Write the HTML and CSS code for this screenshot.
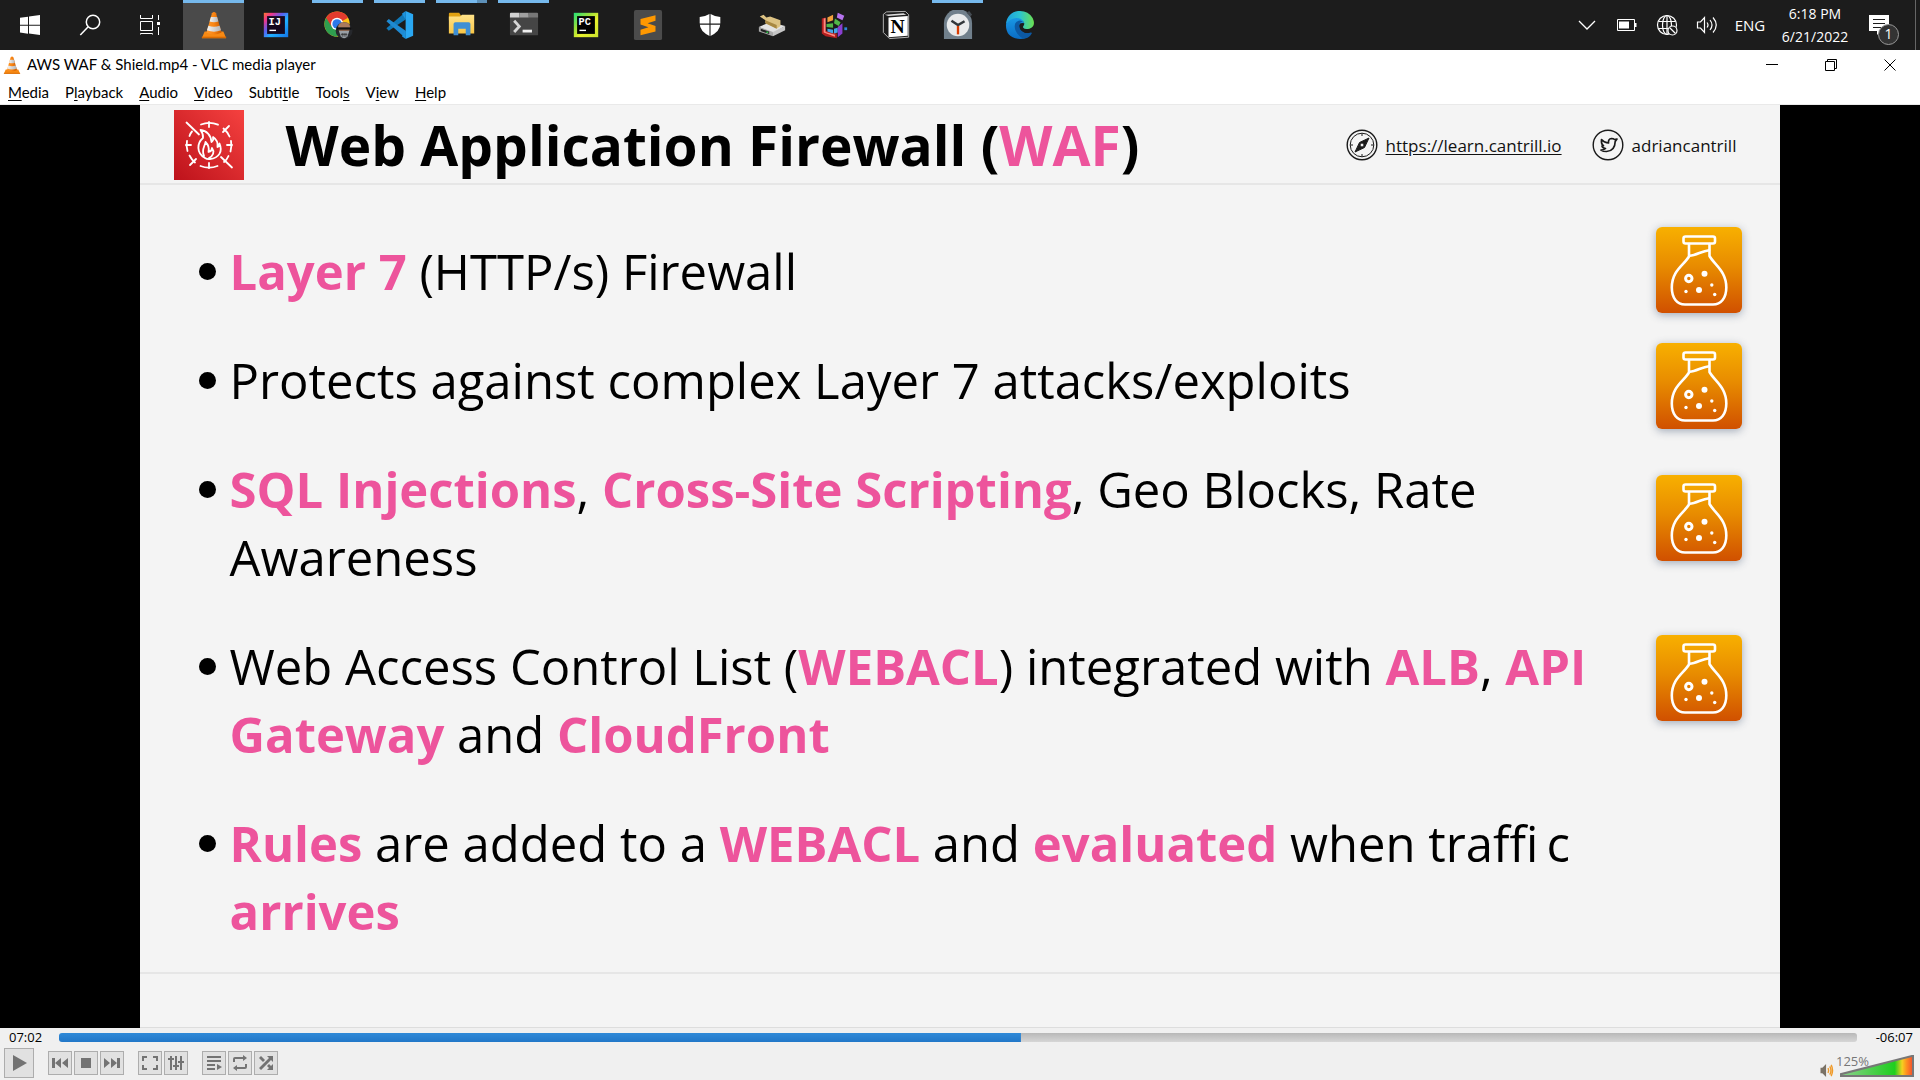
FILE: index.html
```html
<!DOCTYPE html>
<html lang="en">
<head>
<meta charset="utf-8">
<title>AWS WAF &amp; Shield.mp4 - VLC media player</title>
<link rel="stylesheet" href="styles.css">
</head>
<body>
<svg class="defs" aria-hidden="true">
  <defs>
    <linearGradient id="g-cone" x1="0" x2="1"><stop offset="0" stop-color="#ff9a2e"/><stop offset=".5" stop-color="#f98412"/><stop offset="1" stop-color="#c85a00"/></linearGradient>
    <linearGradient id="g-band" x1="0" x2="1"><stop offset="0" stop-color="#f4f4f4"/><stop offset="1" stop-color="#b4b4b4"/></linearGradient>
    <linearGradient id="g-ij" x1="0" y1="0" x2="1" y2="1"><stop offset="0" stop-color="#ff7a2e"/><stop offset=".18" stop-color="#f0358a"/><stop offset=".4" stop-color="#5a5ff0"/><stop offset=".6" stop-color="#1fb0ff"/><stop offset="1" stop-color="#1473e6"/></linearGradient>
    <linearGradient id="g-pc" x1="0" y1="0" x2="1" y2="1"><stop offset="0" stop-color="#21e07a"/><stop offset=".35" stop-color="#9be03a"/><stop offset=".6" stop-color="#e9f02c"/><stop offset="1" stop-color="#c9e22e"/></linearGradient>
    <linearGradient id="g-edge" x1="0" y1="0" x2="1" y2="0"><stop offset="0" stop-color="#1b9fe0"/><stop offset=".5" stop-color="#2cc4cf"/><stop offset="1" stop-color="#6be04f"/></linearGradient>
    <linearGradient id="g-edge2" x1="0" y1="0" x2="0" y2="1"><stop offset="0" stop-color="#1a9ae6"/><stop offset="1" stop-color="#0a6cc4"/></linearGradient>
    <linearGradient id="g-folder" x1="0" y1="0" x2="0" y2="1"><stop offset="0" stop-color="#ffe28a"/><stop offset="1" stop-color="#f9c646"/></linearGradient>
    <linearGradient id="g-waf" x1="0" y1="1" x2="1" y2="0"><stop offset="0" stop-color="#bd121b"/><stop offset="1" stop-color="#f5413f"/></linearGradient>
    <symbol id="cone" viewBox="0 0 32 32">
      <path d="M6 23h20l3 7H3z" fill="#f78a14"/><path d="M3 28.500h26V30H3z" fill="#d96a00"/>
      <path d="M13.800 3.500Q16 1 18.200 3.500L24 24q-8 4.500-16 0z" fill="url(#g-cone)"/>
      <path d="M12.700 7.500h6.600l1.400 4.800q-4.700 1.700-9.400 0z" fill="url(#g-band)"/>
      <path d="M10 16.800q6 2.200 12 0l1.500 4.900q-7.500 3-15 0z" fill="url(#g-band)"/>
    </symbol>
    <symbol id="flask" viewBox="0 0 86 86">
      <g fill="none" stroke="#fff" stroke-width="2.600" stroke-linejoin="round" stroke-linecap="round">
        <rect x="27.500" y="9.500" width="31.500" height="7" rx="2"/>
        <path d="M33 17v12.500C28 38 15.800 43.500 15.800 60.500C15.800 71 21 77.500 29 77.500H57C65 77.500 70.300 71 70.300 60.500C70.300 44 58.500 38 53.500 29V17"/>
        <path d="M33.500 28.800c7-.3 12-4.800 19.500-5.600"/>
        <circle cx="32.800" cy="51.500" r="3.200" stroke-width="3"/>
      </g>
      <g fill="#fff"><circle cx="48.500" cy="46.700" r="3"/><circle cx="43" cy="63" r="3"/><circle cx="55.800" cy="58" r="1.700"/><circle cx="30" cy="64.500" r="1.700"/><circle cx="58.700" cy="67.500" r="1.700"/></g>
    </symbol>
  </defs>
</svg>

<header class="taskbar">
  <nav class="system" aria-label="System">
    <button class="task" aria-label="Start"><svg viewBox="0 0 32 32"><path fill="#fff" d="M6 8.800l8-1.100v8H6zM15 7.500l11-1.500v9.700H15zM6 16.700h8v8l-8-1.100zM15 16.700h11V26l-11-1.500z"/></svg></button>
    <button class="task" aria-label="Search"><svg viewBox="0 0 32 32" fill="none" stroke="#fff" stroke-width="1.500"><circle cx="19" cy="13" r="6.700"/><path d="M14.200 17.800L6.300 26"/></svg></button>
    <button class="task" aria-label="Task View"><svg viewBox="0 0 32 32" fill="none" stroke="#fff"><path d="M6.500 6v3.500h12V6M6.500 12.500h12v9h-12zM6.500 25.500v-1h12v1M24.500 6v5M24.500 18v8"/><path d="M23 13h3v3h-3z" fill="#fff" stroke="none"/></svg></button>
  </nav>
  <nav class="apps" aria-label="Running apps">
    <button class="task active" aria-label="VLC media player"><svg><use href="#cone"/></svg></button>
    <button class="task" aria-label="IntelliJ IDEA"><svg viewBox="0 0 32 32"><path fill="url(#g-ij)" d="M3 3h26v26H3z"/><path fill="#14081e" d="M6.500 6.500h19v19h-19z"/><text x="8" y="16" class="logo-text">IJ</text><path fill="#fff" d="M9 21h7v1.500H9z"/></svg></button>
    <button class="task running" aria-label="Chrome"><svg viewBox="0 0 32 32"><circle cx="15" cy="15" r="13.500" fill="#fbc116"/><path fill="#e33b2e" d="M15 15L3.300 8.300A13.500 13.500 0 0 1 26.700 8.300z"/><path fill="#2f9e4f" d="M15 15L3.300 8.300A13.500 13.500 0 0 0 15 28.500l5-8z"/><path fill="#e33b2e" d="M3.300 8.300L9.500 18V9z"/><circle cx="15" cy="14.800" r="6.500" fill="#fff"/><circle cx="15" cy="14.800" r="5" fill="#2d78e8"/><circle cx="22.500" cy="22" r="9" fill="#26282c"/><path d="M16 19q0-6 6.500-6t6.500 6l-1 3H17z" fill="#a97a5e"/><path d="M14.500 18.500h16v2.500h-16z" fill="#111"/><path d="M17 22.500h11l-2 6q-3.500 3-7 0z" fill="#9aa0a6"/><path d="M19 26h7M20.500 24.500v4M22.500 24.500v4M24.500 24.500v4" stroke="#222" stroke-width=".7"/></svg></button>
    <button class="task running" aria-label="Visual Studio Code"><svg viewBox="0 0 32 32"><path fill="#1078b8" d="M22 2L1.500 19.500 4 22l18-12z"/><path fill="#1f8ad2" d="M4 9.500L1.500 12 22 30v-8z"/><path fill="#2aa8f2" d="M22 1l8 3.500v23L22 31z"/><path fill="#1c91dc" d="M22 1l-4 3 4 6zM22 31l-4-3 4-6z"/></svg></button>
    <button class="task running grouped" aria-label="File Explorer"><svg viewBox="0 0 32 32"><path fill="#e0a112" d="M2 4q0-1 1-1h10l2 3v5H2z"/><path fill="url(#g-folder)" d="M2 7h12l2-2h13v20H2z"/><path fill="#3f8fd4" d="M7 15q0-2 2-2h14q2 0 2 2v12h-5v-7h-8v7H7z"/></svg></button>
    <button class="task running" aria-label="Terminal"><svg viewBox="0 0 32 32"><path fill="#454545" d="M1 5h30v21q0 1-1 1H2q-1 0-1-1z"/><path fill="#d2d2d2" d="M1 4q0-1 1-1h9v5H1z"/><path fill="#a0a0a0" d="M11 3h10v5H11z"/><path fill="#777" d="M21 3h9q1 0 1 1v4H21z"/><path fill="none" stroke="#d6d6d6" stroke-width="3" d="M5.500 11.500l5.500 6-5.500 6"/><path fill="#eee" d="M14.500 21h10v3h-10z"/></svg></button>
    <button class="task" aria-label="PyCharm"><svg viewBox="0 0 32 32"><path fill="url(#g-pc)" d="M3 3h26v26H3z"/><path fill="#000" d="M6.500 6.500h19v19h-19z"/><text x="8" y="16" class="logo-text">PC</text><path fill="#fff" d="M9 21h7v1.500H9z"/></svg></button>
    <button class="task" aria-label="Sublime Text"><svg viewBox="0 0 32 32"><rect x="1" y="0" width="30" height="32" rx="2" fill="#4b4b4b"/><path fill="#ff9800" d="M24 5.500v6L15.500 14 24 17v6L8 27v-6l8.500-2.500L8 15.500v-6z"/></svg></button>
    <button class="task" aria-label="Windows Security"><svg viewBox="0 0 32 32"><path fill="#fff" d="M16 4q5 3 11 3.500v7Q27 23 16 28 5 23 5 14.500v-7Q11 7 16 4z"/><path stroke="#1c1c1c" stroke-width="1.200" d="M16 3v26M4 15h24"/></svg></button>
    <button class="task" aria-label="Disk tool"><svg viewBox="0 0 32 32"><path fill="#e3e3e3" d="M2 18l12-5 16 4-13 8z"/><path fill="#a9a9a9" d="M2 18l15 5.500V28L2 23z"/><path fill="#c6c6c6" d="M17 23.500L30 17v4.500L17 28z"/><path fill="#222" d="M4 20l9 3v2.500L4 22.500z"/><path fill="#2fd24c" d="M10 23h2v1.500h-2z"/><path fill="#dcc283" d="M3 7l4-2 3 3 4-1 11 4v6l-4 3-12-6v-3z"/><path fill="#a88842" d="M9 11l12 5v4L9 14z"/></svg></button>
    <button class="task" aria-label="Colour blocks"><svg viewBox="0 0 32 32"><path fill="#b31f1f" d="M3 9l4-1v14l12 3v5L7 28l-4-3z"/><path fill="#ff8a80" d="M5 9l2-.5v15l10 3v2L5 24z"/><path fill="#f2a03c" d="M9 8l6-3v6l-6 2z"/><path fill="#51b848" d="M8 15l7-1v5l-7-1zM17 9l6 4-2 4-5-3z"/><path fill="#44a6e8" d="M9 20l6 1v4l-6-2zM16 20l4-1v5l-4 1z"/><path fill="#8a3fd0" d="M20 18l5-4v11l-5 4z"/><path fill="#b673ee" d="M20 3l7 3-2 5-6-3z"/><path fill="#2f86d8" d="M27 18.500h3v3h-3z"/></svg></button>
    <button class="task" aria-label="Notion"><svg viewBox="0 0 32 32"><path d="M2.500 4.500L6 2l20-.5 3.500 3.500v24L9 30.500 2.500 24z" fill="#1c1c1c" stroke="#bbb"/><path fill="#fff" d="M8 8l20.500-1.500v21L8 29z"/><path fill="#ddd" d="M4 5l20-1.500 3 1.500L8 6.500z"/><text x="10" y="25" class="notion-text">N</text></svg></button>
    <button class="task running" aria-label="Clock"><svg viewBox="0 0 32 32"><path fill="#71808c" d="M1 31V14A15 15 0 0 1 31 14V31z"/><path fill="#444b52" d="M25 3l3-2 3 4-2 2z"/><circle cx="16" cy="16" r="12" fill="#e9ebec"/><path fill="none" stroke="#32373b" stroke-width="2.700" d="M9 11.500l7 4.500 7-4"/><path stroke="#d83b01" stroke-width="2.500" d="M16 17v9"/></svg></button>
    <button class="task" aria-label="Edge"><svg viewBox="0 0 32 32"><path fill="url(#g-edge2)" d="M1 16C2 9 9 6 15 8q6 2 5 6-6-1-5 5 2 7 13 6-4 6-12 6Q1 30 1 16z"/><path fill="#0c59a4" d="M11 14q-2 6 2 11t8 5.500q5-1 7.500-5.500.500-1.300-1-1-6 2-10-2-3-3-2-7 1-3 4-2-4-4-8.500 1z"/><path fill="url(#g-edge)" d="M1 15C2 6 8 1 16 1q9 0 13.500 7.500 4 9-3.500 11.500-5 1-6.500-1-.700-1 .500-2.500 2-4-3-7Q8 6 1 15z"/></svg></button>
  </nav>
  <div class="tray">
    <button class="tray-btn" aria-label="Show hidden icons"><svg width="18" height="20" viewBox="0 0 18 20" fill="none" stroke="#fff" stroke-width="1.300"><path d="M1 6l8 8 8-8"/></svg></button>
    <button class="tray-btn" aria-label="Battery"><svg width="20" height="20" viewBox="0 0 20 20"><path d="M.5 4.500h17v11H.5z" fill="none" stroke="#fff"/><path fill="#fff" d="M2 6.500h10v7H2zM18 8h1.500v4H18z"/></svg></button>
    <button class="tray-btn" aria-label="Network"><svg width="22" height="22" viewBox="0 0 22 22" fill="none" stroke="#fff" stroke-width="1.200"><circle cx="11" cy="11" r="9.500"/><ellipse cx="11" cy="11" rx="4.500" ry="9.500"/><path d="M2.500 7.500h17M2.500 14.500h13M11 1.500v19"/><circle cx="16.500" cy="16.500" r="4.500" fill="#1c1c1c"/><path d="M13.500 13.500l6 6"/></svg></button>
    <button class="tray-btn" aria-label="Volume"><svg width="22" height="20" viewBox="0 0 22 20" fill="none" stroke="#fff" stroke-width="1.200"><path d="M1.500 7h3l4-4.500v15L4.500 13h-3z"/><path d="M11 7.500q2 2.500 0 5M14 5q4 5 0 10M17 2.500q6.500 7.500 0 15"/></svg></button>
    <button class="language">ENG</button>
    <button class="clock"><span>6:18 PM</span><span>6/21/2022</span></button>
    <button class="notify" aria-label="1 new notification"><svg width="21" height="21" viewBox="0 0 21 21"><path fill="#fff" d="M0 0h20v16h-8l-4 4v-4H0z"/><path stroke="#1c1c1c" d="M4 4.500h12M4 8.500h12M4 12.500h8"/></svg><span class="badge">1</span></button>
  </div>
</header>

<div class="titlebar">
  <svg class="title-icon"><use href="#cone"/></svg>
  <h1 class="window-title">AWS WAF &amp; Shield.mp4 - VLC media player</h1>
  <button class="win-btn" aria-label="Minimize"><svg viewBox="0 0 12 12"><path d="M0 5.500h12"/></svg></button>
  <button class="win-btn" aria-label="Restore"><svg viewBox="0 0 12 12"><path d="M.5 2.500h9v9h-9zM2.500 2V.5h9v9H10"/></svg></button>
  <button class="win-btn" aria-label="Close"><svg viewBox="0 0 12 12"><path d="M.5.5l11 11M11.500.5l-11 11"/></svg></button>
</div>

<nav class="menubar" aria-label="Menu">
  <button><u>M</u>edia</button>
  <button>P<u>l</u>ayback</button>
  <button><u>A</u>udio</button>
  <button><u>V</u>ideo</button>
  <button>Subti<u>t</u>le</button>
  <button>Tool<u>s</u></button>
  <button>V<u>i</u>ew</button>
  <button><u>H</u>elp</button>
</nav>

<main class="video">
  <article class="slide">
    <header class="slide-head">
      <svg class="waf" viewBox="0 0 70 70">
        <path fill="url(#g-waf)" d="M0 0h70v70H0z"/>
        <g fill="none" stroke="#fff" stroke-width="1.800" stroke-linecap="round" stroke-linejoin="round">
          <path d="M27 14.500a22 22 0 0 1 17 .2M49.500 18.500a23 23 0 0 1 6 8M57 31q1 5-.5 10.500M54.500 46q-1.500 3.500-4.500 6M43.500 56a23 23 0 0 1-17 0M21 52.500a22 22 0 0 1-5.500-7M13.500 41q-1.500-5-.5-10M15.500 26q1-3 2.500-4.500"/>
          <path d="M12.500 12.500l12.500 12M55 16l-6 6M47 47l11 10.500M22 49l-6 6M35 12v5M35 53v5M12 35h5M53 35h5"/>
          <path d="M31 48c-9-5-8-15-2-20 .5-4-1-6-2.500-8 6 .5 10.500 5 11 12 1.500-1 2-3 1.500-5 4 2.500 5 6 4.500 10 1.500-.5 2-2 2-3.500 3.500 8-.5 14.500-9.500 15.500-2 .2-3.500 0-5-1z"/>
          <path d="M30 46c-3-6 1-10 1.500-14 3 3 4 6 3 10 2-.5 3.500-2 3.500-4 3 4 1 8-3 10"/>
        </g>
      </svg>
      <h2 class="slide-title">Web Application Firewall (<span class="pink">WAF</span>)</h2>
      <a class="contact" href="https://learn.cantrill.io">
        <svg viewBox="0 0 32 32" fill="none" stroke="#1a1a1a"><circle cx="16" cy="16" r="14.800" stroke-width="1.400"/><circle cx="16" cy="16" r="11.800"/><path d="M16 4.500v2.500M16 25v2.500M4.500 16H7M25 16h2.500"/><path d="M23 9l-4.500 9.500L9 23l4.500-9.500z" fill="#1a1a1a"/><circle cx="16" cy="16" r="2" fill="#f3f3f3"/></svg>
        <span class="link">https://learn.cantrill.io</span>
      </a>
      <a class="contact" href="https://twitter.com/adriancantrill">
        <svg viewBox="0 0 32 32" fill="none" stroke="#1a1a1a" stroke-linejoin="round"><circle cx="16" cy="16" r="14.800" stroke-width="1.400"/><path stroke-width="1.700" d="M9.500 10.500q3 3.500 7 3.500-.5-4 3-4.500 2 0 3 1l2.500-.5-1.800 2.500Q23 22 14.500 22.500q-3.500 0-5.500-1.500 3 0 4.500-1.500-3-.5-3.500-2.500l1.500-.3q-2.500-1.500-2-6.200z"/></svg>
        <span>adriancantrill</span>
      </a>
    </header>
    <div class="slide-body">
      <ul class="points">
        <li><p><b>Layer 7</b> (HTTP/s) Firewall</p></li>
        <li><p>Protects against complex Layer 7 attacks/exploits</p></li>
        <li><p><b>SQL Injections</b>, <b>Cross-Site Scripting</b>, Geo Blocks, Rate Awareness</p></li>
        <li><p>Web Access Control List (<b>WEBACL</b>) integrated with <b>ALB</b>, <b>API Gateway</b> and <b>CloudFront</b></p></li>
        <li><p><b>Rules</b> are added to a <b>WEBACL</b> and <b>evaluated</b> when traffi&#8201;c <b>arrives</b></p></li>
      </ul>
      <div class="labs">
        <svg class="lab"><use href="#flask"/></svg>
        <svg class="lab"><use href="#flask"/></svg>
        <svg class="lab"><use href="#flask"/></svg>
        <svg class="lab"><use href="#flask"/></svg>
      </div>
    </div>
    <footer class="slide-foot"></footer>
  </article>
</main>

<footer class="controls">
  <div class="seek-row">
    <span class="elapsed">07:02</span>
    <input class="seek" type="range" min="0" max="789" value="422" aria-label="Position" style="--pos:53.5%">
    <span class="remaining">-06:07</span>
  </div>
  <div class="button-row">
    <div class="group"><button class="play" aria-label="Play"><svg viewBox="0 0 20 20"><path d="M4 2l14 8-14 8z"/></svg></button></div>
    <div class="group">
      <button aria-label="Previous"><svg viewBox="0 0 16 16"><path d="M0 3h3v10H0zM9 3v10L3 8zM16 3v10l-6-5z"/></svg></button>
      <button aria-label="Stop"><svg viewBox="0 0 16 16"><path d="M3 3h10v10H3z"/></svg></button>
      <button aria-label="Next"><svg viewBox="0 0 16 16"><path d="M0 3l6 5-6 5zM7 3l6 5-6 5zM13 3h3v10h-3z"/></svg></button>
    </div>
    <div class="group">
      <button aria-label="Fullscreen"><svg viewBox="0 0 16 16"><path d="M0 1h5v2H2v3H0zM11 1h5v5h-2V3h-3zM0 10h2v3h3v2H0zM14 10h2v5h-5v-2h3z"/></svg></button>
      <button aria-label="Extended settings"><svg viewBox="0 0 16 16"><path d="M2 1h2v14H2zM0 3h6v2H0zM7 1h2v14H7zM5 10h6v2H5zM12 1h2v14h-2zM10 6h6v2h-6z"/></svg></button>
    </div>
    <div class="group">
      <button aria-label="Playlist"><svg viewBox="0 0 16 16"><path d="M1 1h14v2H1zM1 5h14v2H1zM1 9h8v2H1zM1 13h8v2H1zM11 9l5 3-5 3z"/></svg></button>
      <button aria-label="Loop"><svg viewBox="0 0 16 16"><path d="M1 7V4q0-2 2-2h8V0l4 3-4 3V4H3v3zM15 9v3q0 2-2 2H5v2l-4-3 4-3v2h8V9z"/></svg></button>
      <button aria-label="Random"><svg viewBox="0 0 16 16"><path d="M9 1h6v6l-2-2L3 15l-2-2L11 3zM1 3l2-2 4 4-2 2zM9 11l2-2 2 2 2-2v6H9l2-2z"/></svg></button>
    </div>
    <div class="volume">
      <button class="mute" aria-label="Mute"><svg viewBox="0 0 14 14"><path fill="#7a7266" d="M0 4h2l4-4v14l-4-4H0z"/><path fill="none" stroke="#f09a28" stroke-width="1.500" d="M8 4.500q1.500 2.500 0 5M10 2.500q2.500 4.500 0 9M11.500 1q3 6 0 12"/></svg></button>
      <label class="wedge"><span class="percent">125%</span><span class="wedge-edge"><input type="range" min="0" max="125" value="125" aria-label="Volume"></span></label>
    </div>
  </div>
</footer>
</body>
</html>
```
FILE: styles.css
```css
* { box-sizing: border-box; }

body {
  margin: 0;
  height: 100vh;
  display: flex;
  flex-direction: column;
  overflow: hidden;
  background: #fff;
  color: #000;
  font-family: "Open Sans", "Noto Sans", sans-serif;
  font-size: 14px;
}

button {
  margin: 0;
  padding: 0;
  border: 0;
  background: none;
  color: inherit;
  font: inherit;
}

svg { display: block; }

.defs { position: absolute; width: 0; height: 0; }

/* Taskbar */
.taskbar {
  flex: none;
  display: flex;
  height: 50px;
  background: #1c1c1c;
  color: #fff;
}
.system { display: flex; margin-right: 3px; }
.apps { display: flex; gap: 1px; flex: 1; }
.task {
  position: relative;
  width: 60px;
  display: flex;
  align-items: center;
  justify-content: center;
}
.apps .task { width: 61px; }
.task svg { width: 32px; height: 32px; }
.apps .task svg { width: 30px; height: 30px; }
.task.active { background: #4a4a4a; }
.task.active::before,
.task.running::before {
  content: "";
  position: absolute;
  inset: 0 5px auto;
  height: 3px;
  background: #76b9ed;
}
.task.active::before { inset: 0 0 auto; }
.task.grouped::before { background: linear-gradient(90deg, #76b9ed 80%, #5d90b8 80%); }
.logo-text { fill: #fff; font: bold 11px "Liberation Mono", monospace; }
.notion-text { fill: #000; font: bold 21px "Liberation Serif", serif; }

.tray { display: flex; align-items: stretch; padding-right: 6px; border-right: 1px solid #666; margin-right: 4px; }
.tray-btn {
  width: 40px;
  display: flex;
  align-items: center;
  justify-content: center;
}
.language { width: 46px; font-size: 15px; }
.clock {
  width: 84px;
  display: flex;
  flex-direction: column;
  align-items: center;
  justify-content: center;
  line-height: 23px;
}
.notify {
  position: relative;
  width: 52px;
  display: flex;
  padding: 15px 12px;
}
.badge {
  position: absolute;
  left: 21px;
  top: 24px;
  width: 21px;
  height: 21px;
  border: 1px solid #999;
  border-radius: 50%;
  background: #333;
  line-height: 18px;
}

/* Window title and menu */
.titlebar {
  flex: none;
  display: flex;
  align-items: center;
  height: 29px;
}
.title-icon { width: 20px; height: 20px; margin: 0 5px 0 2px; }
.window-title { flex: 1; margin: 0; font: 400 15px/29px Lato, "Open Sans", sans-serif; }
.win-btn { width: 59px; height: 29px; display: flex; align-items: center; justify-content: center; }
.win-btn:last-child { width: 60px; }
.win-btn svg { width: 12px; height: 12px; fill: none; stroke: #000; }

.menubar {
  flex: none;
  display: flex;
  height: 26px;
  border-bottom: 1px solid #e9e9e9;
  font: 15px/25px Lato, "Open Sans", sans-serif;
}
.menubar button { padding: 1px 8px 0; }
.menubar u { text-underline-offset: 2px; }

/* Video */
.video {
  flex: 1;
  min-height: 0;
  display: flex;
  justify-content: center;
  background: #000;
}
.slide {
  height: 100%;
  aspect-ratio: 16 / 9;
  display: flex;
  flex-direction: column;
  background: #f4f4f4;
}
.slide-head {
  flex: none;
  display: flex;
  align-items: center;
  height: 80px;
  padding: 2px 44px 0 34px;
  border-bottom: 2px solid #e6e6e6;
}
.waf { width: 70px; height: 70px; }
.slide-title { flex: 1; margin: 0 0 0 42px; font-size: 55px; line-height: 76px; white-space: nowrap; }
.pink, .points b { color: #ed549c; }
.contact {
  display: flex;
  align-items: center;
  gap: 8px;
  margin-left: 30px;
  color: #111;
  font-size: 17px;
  text-decoration: none;
}
.contact svg { width: 32px; height: 32px; }
.link { text-decoration: underline; text-underline-offset: 2px; }

.slide-body { flex: 1; display: flex; padding: 42px 38px 0 59px; }
.points {
  flex: 1;
  display: flex;
  flex-direction: column;
  gap: 41px;
  margin: 0;
  padding: 10px 0 0;
  list-style: none;
  font-size: 49px;
  line-height: 68px;
}
.points li { display: grid; grid-template-columns: 31px 1fr; }
.points li::before {
  content: "";
  width: 17px;
  height: 17px;
  margin-top: 26px;
  border-radius: 50%;
  background: #000;
}
.points p { margin: 0; }
.labs { flex: none; width: 86px; display: flex; flex-direction: column; }
.lab {
  flex: none;
  width: 86px;
  height: 86px;
  border-radius: 6px;
  background: linear-gradient(#f8b000, #e88c00 45%, #d05000);
  box-shadow: 0 2px 8px rgba(60, 80, 110, .45);
}
.lab:nth-child(2) { margin-top: 30px; }
.lab:nth-child(3) { margin-top: 46px; }
.lab:nth-child(4) { margin-top: 74px; }
.slide-foot { flex: none; height: 56px; border-top: 2px solid #e6e6e6; border-bottom: 1px solid #ddd; }

/* Player controls */
.controls { flex: none; background: #f0f0f0; }
.seek-row {
  display: grid;
  grid-template-columns: 50px 1fr 56px;
  align-items: center;
  height: 18px;
  padding: 0 7px 0 9px;
  font-size: 13px;
  line-height: 18px;
}
.remaining { text-align: right; }
.seek {
  appearance: none;
  width: 100%;
  height: 9px;
  margin: 0;
  border-radius: 3px;
  background:
    linear-gradient(#2f8ad8, #2277c8) 0 0 / var(--pos) 100% no-repeat,
    linear-gradient(#b8b8b8, #d6d6d6);
}
.seek::-webkit-slider-thumb { appearance: none; width: 1px; height: 1px; opacity: 0; }

.button-row { display: flex; align-items: center; gap: 14px; height: 34px; padding: 0 6px 0 4px; }
.group { display: flex; gap: 2px; }
.group button {
  width: 24px;
  height: 24px;
  display: flex;
  align-items: center;
  justify-content: center;
  border: 1px solid #adadad;
  background: #e1e1e1;
}
.group svg { width: 16px; height: 16px; fill: #737373; }
.group .play { width: 30px; height: 30px; }
.play svg { width: 20px; height: 20px; }

.volume { display: flex; align-items: flex-end; align-self: stretch; gap: 6px; margin-left: auto; padding-bottom: 3px; }
.mute svg { width: 14px; height: 13px; }
.wedge { position: relative; width: 74px; }
.percent { position: absolute; left: -4px; top: -3px; color: #777; font-size: 13px; line-height: 18px; z-index: 1; }
.wedge-edge { display: block; height: 22px; background: #777; clip-path: polygon(0 83%, 97% 0, 100% 0, 100% 100%, 0 100%); }
.wedge input {
  appearance: none;
  display: block;
  width: 100%;
  height: 22px;
  margin: 0;
  background: linear-gradient(90deg, #8fd08f, #1fce1f 74%, #f5d020 84%, #ff9020 90%, #f04030);
  clip-path: polygon(2px 20px, 72px 2px, 72px 20px);
}
.wedge input::-webkit-slider-thumb { appearance: none; width: 1px; height: 1px; opacity: 0; }
```
